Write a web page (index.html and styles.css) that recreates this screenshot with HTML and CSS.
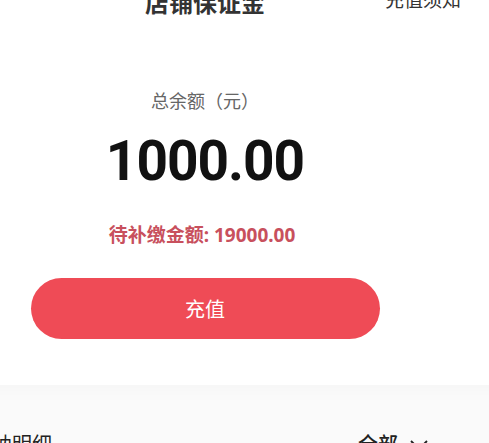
FILE: index.html
```html
<!DOCTYPE html>
<html lang="zh-CN">
<head>
  <meta charset="UTF-8">
  <title>店铺保证金</title>
  <link rel="stylesheet" href="styles.css">
</head>
<body>
  <div class="page">
    <!-- 顶部导航 -->
    <div class="header">
      <span class="title">店铺保证金</span>
      <span class="notice">充值须知</span>
    </div>

    <!-- 余额卡片 -->
    <div class="card">
      <div class="label">总余额（元）</div>
      <div class="amount">1000.00</div>
      <div class="pending">待补缴金额: 19000.00</div>
      <button class="recharge">充值</button>
    </div>

    <!-- 明细 -->
    <div class="detail-row">
      <span class="detail-title">缴纳明细</span>
      <span class="filter">全部
        <svg width="22" height="14" viewBox="0 0 22 14"><path d="M3 3 L11 11 L19 3" fill="none" stroke="#222" stroke-width="1.8"/></svg>
      </span>
    </div>
  </div>
</body>
</html>
```

FILE: styles.css
```css
body {
  margin: 0;
  background: #fafafa;
  font-family: "Noto Sans", "Noto Sans CJK SC", sans-serif;
  overflow: hidden;
}

.page {
  margin-top: -24px;
  margin-left: -56px;
  width: 600px;
}

.header {
  height: 50px;
  padding-right: 78px;
  background: white;
  display: flex;
  align-items: center;
  justify-content: center;
  position: relative;
}

.title {
  font-size: 24px;
  font-weight: bold;
  color: #333;
}

.notice {
  position: absolute;
  right: 83px;
  top: 9px;
  font-size: 19px;
  color: #333;
}

.card {
  background: white;
  padding: 63px 78px 46px 0;
  text-align: center;
  box-shadow: 0 6px 10px rgba(0, 0, 0, 0.015);
}

.label {
  font-size: 18px;
  line-height: 24px;
  color: #666;
}

.amount {
  margin-top: 21px;
  font-family: Roboto, sans-serif;
  font-size: 55px;
  line-height: 54px;
  font-weight: bold;
  color: #111;
  letter-spacing: -1px;
}

.pending {
  margin-top: 35px;
  margin-right: 6px;
  font-size: 19px;
  line-height: 24px;
  font-weight: bold;
  color: #c8505d;
}

.recharge {
  display: block;
  margin: 31px auto 0;
  width: 349px;
  height: 61px;
  border: none;
  border-radius: 31px;
  background: #ef4b56;
  color: white;
  font-family: "Noto Sans CJK SC", sans-serif;
  font-size: 20px;
  cursor: pointer;
}

.detail-row {
  margin-top: 48px;
  padding: 0 114px 0 28px;
  display: flex;
  justify-content: space-between;
  align-items: center;
  line-height: 24px;
  font-size: 20px;
  color: #222;
}

.filter {
  display: flex;
  align-items: center;
  gap: 10px;
  font-weight: 500;
}
```
